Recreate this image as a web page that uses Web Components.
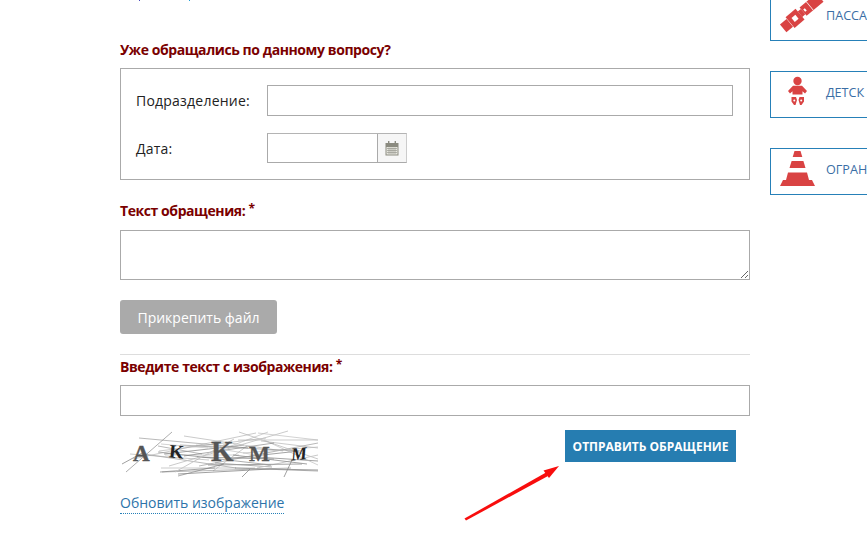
<!DOCTYPE html>
<html lang="ru">
<head>
<meta charset="utf-8">
<title>Обращение</title>
<style>
html, body { margin: 0; padding: 0; background: #fff; height: 560px; overflow: hidden; }
body { font-family: "Open Sans", "Noto Sans", sans-serif; }
</style>
</head>
<body>
<appeal-page>
  <appeal-form>
    <form-heading slot="first">Уже обращались по данному вопросу?</form-heading>
  </appeal-form>
  <rail-card slot="rail" icon="belt" text="ПАССА"></rail-card>
  <rail-card slot="rail" icon="baby" text="ДЕТСК"></rail-card>
  <rail-card slot="rail" icon="cone" text="ОГРАН"></rail-card>
</appeal-page>

<script>
class FormHeading extends HTMLElement {
  constructor() {
    super();
    const root = this.attachShadow({ mode: 'open' });
    root.innerHTML = `
    <style>
      :host { display: block; height: 20px; font: bold 14px/20px "Open Sans", sans-serif; color: #7a0000; letter-spacing: -0.42px; }
      .req { font-size: 12px; line-height: 0; position: relative; top: -3px; letter-spacing: 0; }
    </style>
    <slot></slot>${this.hasAttribute('required') ? ' <span class="req">*</span>' : ''}`;
  }
}

class TextBox extends HTMLElement {
  constructor() {
    super();
    this.attachShadow({ mode: 'open' }).innerHTML = `
    <style>
      :host { display: block; height: 31px; }
      input { display: block; box-sizing: border-box; width: 100%; height: 100%; margin: 0;
              border: 1px solid #aaa; background: #fff; outline: none; padding: 0 6px; }
    </style>
    <input type="text">`;
  }
}

class DateBox extends HTMLElement {
  constructor() {
    super();
    this.attachShadow({ mode: 'open' }).innerHTML = `
    <style>
      :host { display: flex; width: 140px; height: 30px; box-sizing: border-box; border: 1px solid #aaa;
              border-right-color: #ccc; border-top-color: #b4b4b4; }
      input { flex: 1; min-width: 0; border: 0; margin: 0; padding: 0 6px; outline: none; background: #fff; }
      .btn { width: 28px; border-left: 1px solid #aaa; background: #f6f6f6;
             display: flex; align-items: center; justify-content: center; }
    </style>
    <input type="text">
    <div class="btn">
      <svg width="14" height="15" viewBox="0 0 14 15">
        <rect x="0.5" y="2" width="13" height="12.5" fill="#8b8b80"/>
        <rect x="1.5" y="6" width="11" height="7.5" fill="#e8e8e0"/>
        <rect x="3" y="0" width="1.4" height="4" fill="#8b8b80"/>
        <rect x="9.6" y="0" width="1.4" height="4" fill="#8b8b80"/>
        <path d="M2 7.5h10M2 9.5h10M2 11.5h10M4 6.5v6.5M6 6.5v6.5M8 6.5v6.5M10 6.5v6.5" stroke="#9a9a90" stroke-width="0.7" fill="none"/>
      </svg>
    </div>`;
  }
}

class CaptchaImage extends HTMLElement {
  constructor() {
    super();
    // noise lines of the captcha, fixed seed so the picture is always the same
    let seed = 11;
    const rnd = (n) => { seed = (seed * 16807) % 2147483647; return seed % n; };
    const grey = ['#999', '#b4b4b4', '#8a8a8a', '#c4c4c4', '#a8a8a8', '#777'];
    let noise = '';
    for (let i = 0; i < 38; i++) {
      const x1 = rnd(150), y1 = 1 + rnd(48);
      const x2 = x1 + 30 + rnd(110), y2 = 2 + rnd(46);
      noise += `<line x1="${x1}" y1="${y1}" x2="${Math.min(x2, 198)}" y2="${y2}" stroke="${grey[i % 6]}" stroke-width="${i % 3 ? 0.6 : 0.9}"/>`;
    }
    this.attachShadow({ mode: 'open' }).innerHTML = `
    <style>
      :host { display: block; width: 200px; height: 50px; }
      svg { display: block; }
      text { font-family: "Liberation Serif", serif; font-weight: bold; fill: #555; }
    </style>
    <svg width="200" height="50" viewBox="0 0 200 50">
      ${noise}
      <path d="M58 46 L150 41 L198 42 M2 36 L24 24 M130 41l-8 8M172 32l-8 17" stroke="#888" stroke-width="0.8" fill="none"/>
      <text x="13" y="33" font-size="23" stroke="#555" stroke-width="0.5">A</text>
      <text x="49" y="30" font-size="19" style="fill:#222" transform="rotate(6 55 26)">K</text>
      <text x="91" y="33" font-size="29" stroke="#555" stroke-width="0.3">K</text>
      <text x="129" y="33" font-size="22" stroke="#555" stroke-width="0.3">M</text>
      <text x="171" y="32" font-size="18" font-style="italic" style="fill:#222" transform="rotate(-5 178 28)">M</text>
    </svg>`;
  }
}

// each icon carries its own offset inside the 55px icon cell of the card
const railIcons = {
  belt: `<svg style="margin:5px 0 0 4px" width="50" height="40" viewBox="0 0 50 40">
      <g transform="translate(-1.5 .5) rotate(-40 25 15)" fill="#d94343">
      <rect x="5" y="10" width="8.6" height="10"/><rect x="14" y="8" width="13" height="14"/>
      <rect x="18" y="12.5" width="5" height="5" fill="#fff"/><rect x="27" y="11.5" width="4" height="7"/>
      <rect x="31" y="9.5" width="22" height="11"/><rect x="32.5" y="13.5" width="2" height="3" fill="#fff"/>
      <rect x="39.5" y="9.5" width="0.6" height="11" fill="#fff"/></g></svg>`,
  baby: `<svg style="margin:3px 0 0 9px" width="36" height="36" viewBox="0 0 36 36"><g fill="#d94343">
      <circle cx="17.5" cy="6" r="4.2"/>
      <path d="M8 16 L13 10.8 H22 L27 16 L25 18.4 L22.5 16.2 V19.5 H12.5 V16.2 L10 18.4 Z"/>
      <path d="M11.5 22 H16 L17 25 L15.5 30 H14 L11.5 26.5 Z M24 22 H19.5 L18.5 25 L20 30 H21.5 L24 26.5 Z"/>
      </g><circle cx="14.3" cy="25.5" r="1" fill="#fff"/><circle cx="21.2" cy="25.5" r="1" fill="#fff"/></svg>`,
  cone: `<svg style="margin:-1px 0 0 4px" width="45" height="42" viewBox="0 0 45 42"><g fill="#d94343">
      <path d="M19.5 3 H25.5 L27.3 9 H17.7 Z"/><path d="M16.6 13 H28.4 L30.5 20 H14.5 Z"/>
      <path d="M13 24.5 H32 L34 32 H37 L40 38 H5 L8 32 H11 Z"/></g></svg>`
};

class RailCard extends HTMLElement {
  constructor() {
    super();
    const icon = railIcons[this.getAttribute('icon')];
    this.attachShadow({ mode: 'open' }).innerHTML = `
    <style>
      :host { display: block; height: 47px; width: 97px; box-sizing: border-box; border: 1px solid #2680b8; border-right: 0; }
      .row { display: flex; align-items: center; height: 100%; }
      .ico { width: 55px; align-self: stretch; flex: none; }
      svg { display: block; }
      .txt { font: 12.6px "Open Sans", sans-serif; color: #3a6ea5; white-space: nowrap; margin-top: -4px; }
    </style>
    <div class="row"><div class="ico">${icon}</div><div class="txt">${this.getAttribute('text')}</div></div>`;
  }
}

class SubmitButton extends HTMLElement {
  constructor() {
    super();
    this.attachShadow({ mode: 'open' }).innerHTML = `
    <style>
      :host { display: flex; align-items: center; justify-content: center; width: 171px; height: 32px; margin-top: 2px;
              background: #267db1; color: #fff; font: bold 12px "Open Sans", sans-serif; cursor: pointer; }
    </style>
    <slot></slot>`;
  }
}

class AttachButton extends HTMLElement {
  constructor() {
    super();
    this.attachShadow({ mode: 'open' }).innerHTML = `
    <style>
      :host { display: flex; align-items: center; justify-content: center; width: 157px; height: 34px;
              border-radius: 3px; background: #aaa; color: #fff; font: 14px "Open Sans", sans-serif; cursor: pointer; }
    </style>
    <slot></slot>`;
  }
}

class RedArrow extends HTMLElement {
  constructor() {
    super();
    this.attachShadow({ mode: 'open' }).innerHTML = `
    <style>
      :host { position: absolute; left: 460px; top: 460px; width: 104px; height: 64px; pointer-events: none; }
      svg { display: block; }
    </style>
    <svg width="104" height="64" viewBox="0 0 104 64">
      <path d="M4.5 58.5 L6 60.5 L88 16 L86 12.5 Z" fill="#f80d0d"/>
      <path d="M99 6 L83.5 10.5 L89 18 Z" fill="#f80d0d"/>
    </svg>`;
  }
}

class AppealForm extends HTMLElement {
  constructor() {
    super();
    this.attachShadow({ mode: 'open' }).innerHTML = `
    <style>
      :host { display: block; width: 630px; font: 14px "Open Sans", sans-serif; color: #222; }
      /* bottoms of the line scrolled out above the form */
      .scrolled { display: flex; height: 1px; padding-left: 19px; gap: 49px; margin-bottom: 39px; }
      .scrolled i { width: 1px; background: #4a4ac0; }
      .scrolled i + i { background: #20a0d8; }
      .panel { box-sizing: border-box; height: 112px; margin-top: 8px; border: 1px solid #aaa;
               padding: 16px 16px 0 15px; display: grid; grid-template-columns: 131px 466px;
               grid-template-rows: 31px 30px; row-gap: 17px; align-items: center; letter-spacing: 0.22px; }
      .h2 { margin-top: 21px; }
      textarea { display: block; box-sizing: border-box; width: 630px; height: 50px; margin: 9px 0 0;
                 border: 1px solid #aaa; outline: none; background: #fff; }
      attach-button { margin-top: 20px; }
      hr { border: 0; border-top: 1px solid #ddd; margin: 20px 0 0; }
      .h3 { margin-top: 2px; }
      .captcha-box { margin-top: 8px; }
      .bottom { display: flex; justify-content: space-between; align-items: flex-start; margin-top: 12px; padding-right: 14px; }
      .link-row { margin-top: 13px; line-height: 24px; }
      a { color: #2d74aa; text-decoration: none; border-bottom: 1px dotted #2680b8; display: inline-block; line-height: 20px; }
    </style>
    <div class="scrolled"><i></i><i></i></div>
    <slot name="first"></slot>
    <div class="panel">
      <span>Подразделение:</span><text-box></text-box>
      <span>Дата:</span><date-box></date-box>
    </div>
    <form-heading class="h2" required>Текст обращения:</form-heading>
    <textarea></textarea>
    <attach-button>Прикрепить файл</attach-button>
    <hr>
    <form-heading class="h3" required>Введите текст с изображения:</form-heading>
    <text-box class="captcha-box"></text-box>
    <div class="bottom">
      <captcha-image></captcha-image>
      <submit-button>ОТПРАВИТЬ ОБРАЩЕНИЕ</submit-button>
    </div>
    <div class="link-row"><a href="#">Обновить изображение</a></div>`;
  }
}

class AppealPage extends HTMLElement {
  constructor() {
    super();
    this.attachShadow({ mode: 'open' }).innerHTML = `
    <style>
      :host { display: grid; grid-template-columns: 630px 97px; column-gap: 20px; padding-left: 120px;
              position: relative; height: 560px; overflow: hidden; }
      .rail { display: flex; flex-direction: column; gap: 30px; margin-top: -6px; }
    </style>
    <div><slot></slot></div>
    <div class="rail"><slot name="rail"></slot></div>
    <red-arrow></red-arrow>`;
  }
}

customElements.define('form-heading', FormHeading);
customElements.define('text-box', TextBox);
customElements.define('date-box', DateBox);
customElements.define('captcha-image', CaptchaImage);
customElements.define('rail-card', RailCard);
customElements.define('submit-button', SubmitButton);
customElements.define('attach-button', AttachButton);
customElements.define('red-arrow', RedArrow);
customElements.define('appeal-form', AppealForm);
customElements.define('appeal-page', AppealPage);
</script>
</body>
</html>
